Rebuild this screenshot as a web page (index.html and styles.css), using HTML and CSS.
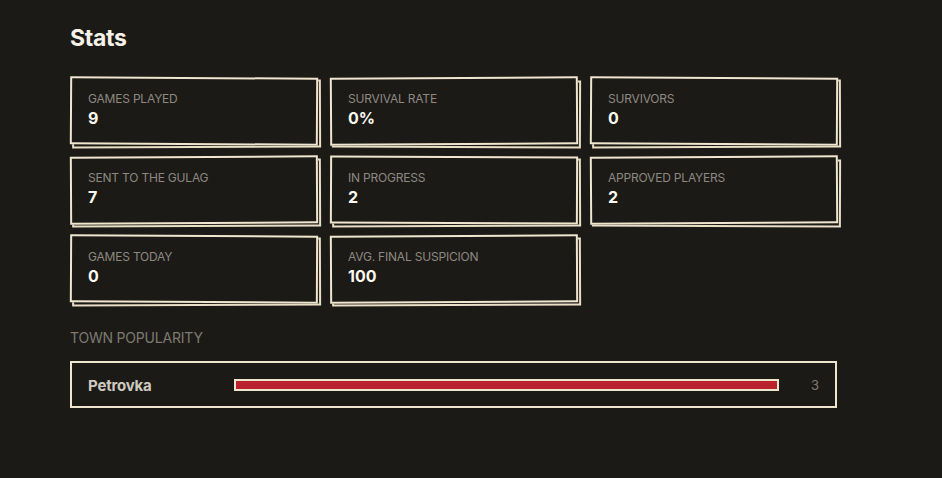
FILE: index.html
```html
<!DOCTYPE html>
<html>
<head>
<meta charset="utf-8">
<link rel="stylesheet" href="styles.css">
</head>
<body>
<main class="page">
  <h1 class="title">Stats</h1>
  <section class="grid">
    <div class="card c1"><div class="card-body"><div class="label">Games played</div><div class="value">9</div></div></div>
    <div class="card c2"><div class="card-body"><div class="label">Survival rate</div><div class="value">0%</div></div></div>
    <div class="card c3"><div class="card-body"><div class="label">Survivors</div><div class="value">0</div></div></div>
    <div class="card c4"><div class="card-body"><div class="label">Sent to the Gulag</div><div class="value">7</div></div></div>
    <div class="card c5"><div class="card-body"><div class="label">In progress</div><div class="value">2</div></div></div>
    <div class="card c6"><div class="card-body"><div class="label">Approved players</div><div class="value">2</div></div></div>
    <div class="card c7"><div class="card-body"><div class="label">Games today</div><div class="value">0</div></div></div>
    <div class="card c8"><div class="card-body"><div class="label">Avg. final suspicion</div><div class="value">100</div></div></div>
  </section>
  <h2 class="section-label">Town popularity</h2>
  <div class="town-list">
    <div class="town-row">
      <span class="town-name">Petrovka</span>
      <div class="bar-track"><div class="bar-fill" style="width:100%"></div></div>
      <span class="town-count">3</span>
    </div>
  </div>
</main>
</body>
</html>
```
FILE: styles.css
```css
html, body {
  margin: 0;
  padding: 0;
  background: #1c1a16;
}
body {
  font-family: "Inter", "Noto Sans", sans-serif;
  color: #f4efe3;
}
.page {
  width: 768px;
  padding: 22px 0 0 70px;
}
.title {
  margin: 0;
  font-size: 23px;
  font-weight: 700;
  letter-spacing: -0.3px;
  line-height: 32px;
  color: #f6f2e8;
}
.grid {
  margin-top: 23px;
  display: grid;
  grid-template-columns: repeat(3, 248px);
  column-gap: 12px;
  row-gap: 11px;
}
.card {
  position: relative;
  height: 68px;
  isolation: isolate;
}
.card::before {
  content: "";
  position: absolute;
  top: 3px; left: 2px; right: -3px; bottom: -3px;
  border: 2px solid #e9dfc6;
  background: #1c1a16;
  transform: rotate(-0.25deg);
}
.card::after {
  content: "";
  position: absolute;
  inset: 0;
  border: 2px solid #efe6cf;
  background: #1c1a16;
  transform: rotate(0.35deg);
}
.c2::after, .c6::after { transform: rotate(-0.35deg); }
.c2::before, .c6::before { transform: rotate(0.2deg); }
.c4::after, .c8::after { transform: rotate(-0.3deg); }
.c5::after { transform: rotate(0.25deg); }
.c7::after { transform: rotate(0.3deg); }
.card-body {
  position: relative;
  z-index: 1;
  padding: 14px 18px 0;
}
.label {
  font-size: 12px;
  line-height: 15px;
  text-transform: uppercase;
  color: #8d8981;
  letter-spacing: -0.2px;
}
.value {
  margin-top: 2px;
  font-size: 16px;
  font-weight: 700;
  line-height: 20px;
  color: #fbf8f0;
}
.section-label {
  margin: 26px 0 0;
  font-size: 14px;
  font-weight: 400;
  text-transform: uppercase;
  color: #7e7a72;
  line-height: 18px;
  letter-spacing: -0.2px;
}
.town-list {
  margin-top: 14px;
}
.town-row {
  display: flex;
  align-items: center;
  height: 47px;
  border: 2px solid #eee5cd;
  padding: 1px 16px 0 16px;
  width: 767px;
  box-sizing: border-box;
}
.town-name {
  width: 146px;
  font-size: 15px;
  font-weight: 700;
  letter-spacing: -0.2px;
  color: #cfcac0;
}
.bar-track {
  flex: 1;
  height: 12px;
}
.bar-fill {
  height: 100%;
  box-sizing: border-box;
  border: 2px solid #eee5cd;
  background: #b8232f;
}
.town-count {
  width: 40px;
  text-align: right;
  font-size: 13px;
  color: #7e7a72;
}
```
